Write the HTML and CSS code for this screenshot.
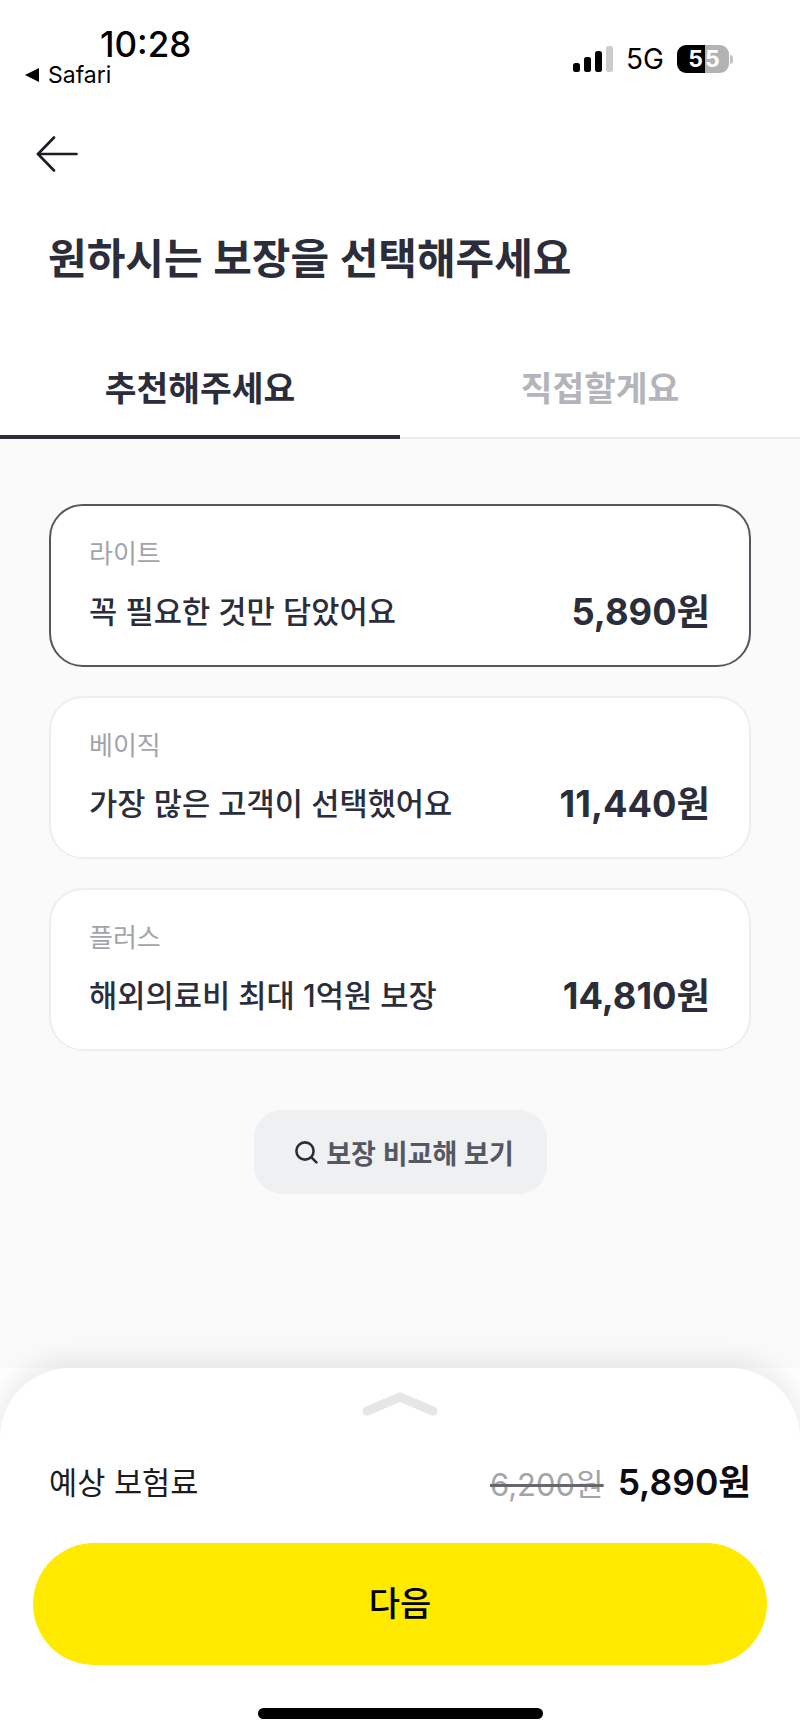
FILE: index.html
```html
<!DOCTYPE html>
<html lang="ko">
<head>
  <meta charset="UTF-8">
  <meta name="viewport" content="width=device-width, initial-scale=1.0">
  <title>보장 선택</title>
  <link rel="stylesheet" href="styles.css">
</head>
<body>
  <div class="page">
    <header class="top">
      <div class="status">
        <div class="status-left">
          <div class="time">10:28</div>
          <div class="back-app"><span class="tri"></span>Safari</div>
        </div>
        <div class="status-right">
          <svg class="signal" width="40" height="26" viewBox="0 0 40 26">
            <rect x="0" y="17" width="7" height="9" rx="2.5" fill="#000"/>
            <rect x="11" y="11" width="7" height="15" rx="2.5" fill="#000"/>
            <rect x="22" y="5" width="7" height="21" rx="2.5" fill="#000"/>
            <rect x="33" y="0" width="7" height="26" rx="2.5" fill="#ccc"/>
          </svg>
          <span class="net">5G</span>
          <div class="battery">
            <span class="bat-on">5</span><span class="bat-off">5</span>
          </div>
          <span class="bat-tip"></span>
        </div>
      </div>

      <button class="back" aria-label="뒤로">
        <svg width="42" height="36" viewBox="0 0 42 36" fill="none" stroke="#1c1c22" stroke-width="2.6" stroke-linecap="round" stroke-linejoin="round">
          <path d="M18 1.5 2 18l16 16.5"/>
          <path d="M2 18h38.5"/>
        </svg>
      </button>

      <h1 class="title">원하시는 보장을 선택해주세요</h1>

      <nav class="tabs">
        <div class="tab active">추천해주세요</div>
        <div class="tab">직접할게요</div>
      </nav>
    </header>

    <main class="content">
      <div class="plan selected">
        <div class="plan-name">라이트</div>
        <div class="plan-row">
          <span class="plan-desc">꼭 필요한 것만 담았어요</span>
          <span class="plan-price">5,890원</span>
        </div>
      </div>
      <div class="plan">
        <div class="plan-name">베이직</div>
        <div class="plan-row">
          <span class="plan-desc">가장 많은 고객이 선택했어요</span>
          <span class="plan-price">11,440원</span>
        </div>
      </div>
      <div class="plan">
        <div class="plan-name">플러스</div>
        <div class="plan-row">
          <span class="plan-desc">해외의료비 최대 1억원 보장</span>
          <span class="plan-price">14,810원</span>
        </div>
      </div>

      <button class="compare">
        <svg width="24" height="24" viewBox="0 0 24 24" fill="none" stroke="#2b2e3a" stroke-width="2.6" stroke-linecap="round">
          <circle cx="11" cy="11" r="8.6"/>
          <path d="m17.4 17.4 5 5"/>
        </svg>
        보장 비교해 보기
      </button>
    </main>

    <section class="sheet">
      <svg class="handle" width="76" height="24" viewBox="0 0 76 24" fill="none" stroke="#e6e6e6" stroke-width="9" stroke-linecap="round" stroke-linejoin="round">
        <path d="M5 19 38 5l33 14"/>
      </svg>
      <div class="total">
        <span class="total-label">예상 보험료</span>
        <div class="total-prices">
          <s class="old-price">6,200원</s>
          <span class="new-price">5,890원</span>
        </div>
      </div>
      <button class="next">다음</button>
      <div class="home-bar"></div>
    </section>
  </div>
</body>
</html>
```

FILE: styles.css
```css
* {
  box-sizing: border-box;
}
body {
  margin: 0;
  background: #fff;
  color: #2b2e3a;
  font-family: Inter, "Noto Sans CJK KR", sans-serif;
}
button {
  font-family: inherit;
  border: none;
  padding: 0;
  background: none;
}
.page {
  width: 800px;
  height: 1735px;
  display: flex;
  flex-direction: column;
  overflow: hidden;
}

/* status bar */
.status {
  height: 88px;
  display: flex;
  justify-content: space-between;
  padding: 25px 67px 0 25px;
}
.time {
  margin-left: 75px;
  font-size: 35px;
  line-height: 38px;
  font-weight: 500;
  color: #000;
}
.back-app {
  display: flex;
  align-items: center;
  gap: 9px;
  font-size: 23px;
  line-height: 24px;
  color: #000;
}
.tri {
  width: 0;
  height: 0;
  border-top: 7px solid transparent;
  border-bottom: 7px solid transparent;
  border-right: 14px solid #000;
}
.status-right {
  display: flex;
  align-items: center;
  height: 32px;
  margin-top: 18px;
}
.net {
  margin-left: 13px;
  font-size: 28px;
  color: #000;
}
.battery {
  margin-left: 13px;
  width: 52px;
  height: 28px;
  border-radius: 9px;
  overflow: hidden;
  display: flex;
  font-size: 23px;
  line-height: 28px;
  font-weight: 700;
  color: #fff;
}
.bat-on {
  width: 28px;
  background: #000;
  text-align: right;
  padding-right: 2px;
}
.bat-off {
  width: 24px;
  background: #b3b3b3;
}
.bat-tip {
  width: 3px;
  height: 9px;
  margin-left: 1px;
  border-radius: 0 3px 3px 0;
  background: #c4c4c4;
}

/* header */
.back {
  display: block;
  margin: 48px 0 0 36px;
  height: 36px;
}
.title {
  margin: 59px 0 0 48px;
  font-size: 42px;
  line-height: 56px;
  font-weight: 600;
  letter-spacing: 0;
}
.tabs {
  display: flex;
  margin-top: 78px;
  border-bottom: 2px solid #e9ebef;
}
.tab {
  flex: 1;
  height: 74px;
  margin-bottom: -2px;
  text-align: center;
  font-size: 34.5px;
  line-height: 48px;
  font-weight: 700;
  color: #b4b5bb;
}
.tab.active {
  color: #2b2e3a;
  border-bottom: 4px solid #2b2e3a;
}

/* plans */
.content {
  flex: 1;
  background: #fafafa;
  padding: 65px 49px 0;
  display: flex;
  flex-direction: column;
  gap: 29px;
}
.plan {
  height: 163px;
  padding: 30px 39px 0 38px;
  background: #fff;
  border: 2px solid #eeeef0;
  border-radius: 34px;
}
.plan.selected {
  border-color: #55565f;
}
.plan-name {
  font-size: 26px;
  line-height: 36px;
  color: #a3a4aa;
}
.plan-row {
  display: flex;
  justify-content: space-between;
  align-items: center;
  margin-top: 17px;
}
.plan-desc {
  font-size: 30.7px;
  line-height: 46px;
  font-weight: 500;
}
.plan-price {
  font-size: 36.3px;
  line-height: 46px;
  font-weight: 700;
}
.compare {
  align-self: center;
  width: 293px;
  height: 84px;
  margin-top: 30px;
  padding-left: 8px;
  display: flex;
  align-items: center;
  justify-content: center;
  gap: 8px;
  background: #eff0f2;
  border-radius: 28px;
  font-size: 27px;
  font-weight: 600;
  color: #555863;
}

/* bottom sheet */
.sheet {
  height: 367px;
  padding: 24px 33px 0;
  background: #fff;
  border-radius: 70px 70px 0 0;
  box-shadow: 0 -6px 30px rgba(0, 0, 0, 0.1);
  position: relative;
  display: flex;
  flex-direction: column;
}
.handle {
  align-self: center;
}
.total {
  display: flex;
  justify-content: space-between;
  align-items: center;
  margin-top: 44px;
  padding: 0 16px;
}
.total-label {
  font-size: 30.6px;
  line-height: 44px;
  color: #1c1c22;
}
.total-prices {
  display: flex;
  align-items: center;
  gap: 14px;
}
.old-price {
  font-size: 31px;
  color: #a3a4aa;
  text-decoration-color: #66676d;
}
.new-price {
  font-size: 35.5px;
  line-height: 44px;
  font-weight: 600;
  color: #0c0c12;
}
.next {
  height: 122px;
  margin-top: 38px;
  padding-bottom: 6px;
  border-radius: 61px;
  background: #ffea00;
  font-size: 34px;
  font-weight: 500;
  color: #000;
}
.home-bar {
  align-self: center;
  width: 285px;
  height: 11px;
  margin-top: 43px;
  border-radius: 6px;
  background: #000;
}
```
